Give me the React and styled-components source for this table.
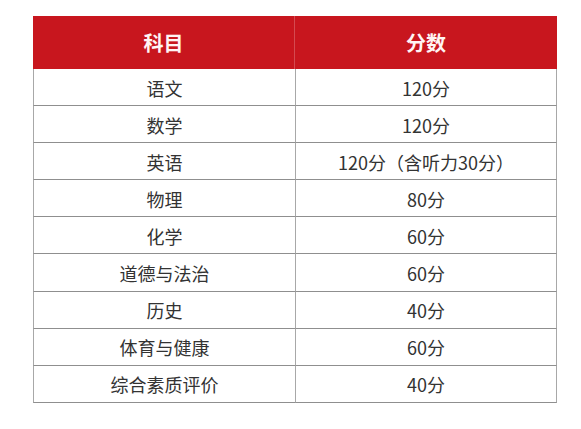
import React from "react";
import styled, { createGlobalStyle } from "styled-components";

const Global = createGlobalStyle`
  html, body { margin: 0; padding: 0; background: #ffffff; }
  body { font-family: "Noto Sans CJK SC", "Noto Sans", sans-serif; }
`;

const Page = styled.div`
  padding: 16px 0 0 33px;
`;

const Table = styled.div`
  width: 524px;
  display: grid;
  grid-template-columns: 262px 262px;
`;

const HeadCell = styled.div`
  height: 53px;
  background: #c8161e;
  color: #fff4f4;
  font-size: 20px;
  font-weight: 700;
  display: flex;
  align-items: center;
  justify-content: center;
  box-sizing: border-box;
  border-right: ${(p) => (p.$first ? "1px solid #d44a50" : "none")};
`;

const Cell = styled.div`
  height: 37.1px;
  box-sizing: border-box;
  border-bottom: 1px solid #8f8f8f;
  border-left: ${(p) => (p.$first ? "1px solid #a8a8a8" : "1px solid #a8a8a8")};
  border-right: ${(p) => (p.$first ? "none" : "1px solid #a8a8a8")};
  display: flex;
  align-items: center;
  justify-content: center;
  font-size: 18px;
  color: #333333;
  padding-top: 1px;
`;

const rows = [
  ["语文", "120分"],
  ["数学", "120分"],
  ["英语", "120分（含听力30分）"],
  ["物理", "80分"],
  ["化学", "60分"],
  ["道德与法治", "60分"],
  ["历史", "40分"],
  ["体育与健康", "60分"],
  ["综合素质评价", "40分"],
];

export default function App() {
  return (
    <>
      <Global />
      <Page>
        <Table>
          <HeadCell $first>科目</HeadCell>
          <HeadCell>分数</HeadCell>
          {rows.map(([a, b]) => (
            <React.Fragment key={a}>
              <Cell $first>{a}</Cell>
              <Cell>{b}</Cell>
            </React.Fragment>
          ))}
        </Table>
      </Page>
    </>
  );
}
